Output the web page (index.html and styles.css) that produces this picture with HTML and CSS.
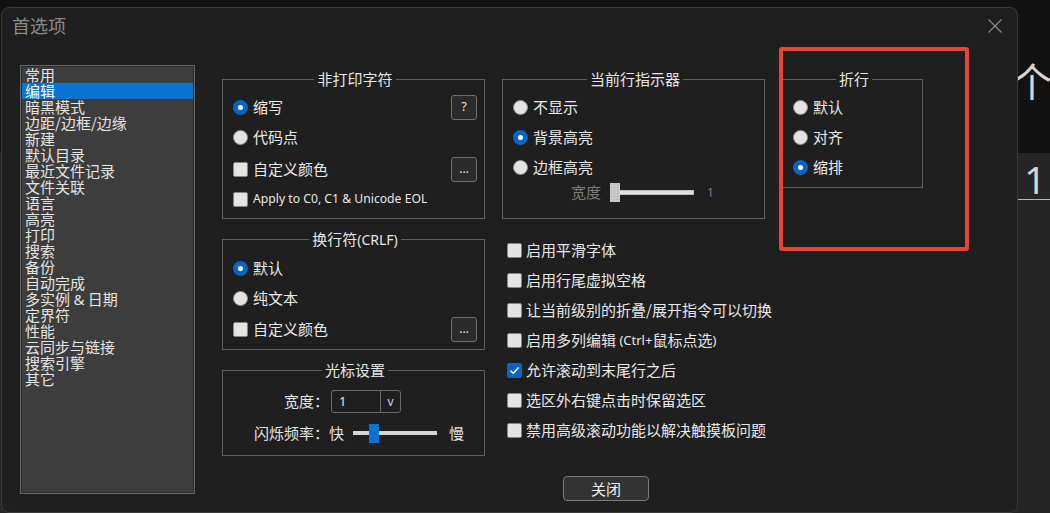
FILE: index.html
```html
<!DOCTYPE html>
<html lang="zh-CN">
<head>
<meta charset="utf-8">
<title>首选项</title>
<link rel="stylesheet" href="styles.css">
</head>
<body>
<div class="app">
  <div class="app-top"><span class="glyph-ge">个</span></div>
  <div class="app-bottom"><span class="glyph-one">1</span></div>
</div>

<div class="dialog">
  <header class="titlebar">
    <span class="title">首选项</span>
    <svg class="close-x" width="14" height="14" viewBox="0 0 14 14"><path d="M0.5 0.5 L13.5 13.5 M13.5 0.5 L0.5 13.5" stroke="#8c8c8c" stroke-width="1.1" fill="none"/></svg>
  </header>

  <div class="main">
    <ul class="nav">
      <li>常用</li>
      <li class="sel">编辑</li>
      <li>暗黑模式</li>
      <li>边距/边框/边缘</li>
      <li>新建</li>
      <li>默认目录</li>
      <li>最近文件记录</li>
      <li>文件关联</li>
      <li>语言</li>
      <li>高亮</li>
      <li>打印</li>
      <li>搜索</li>
      <li>备份</li>
      <li>自动完成</li>
      <li>多实例 <span class="lat">&amp;</span> 日期</li>
      <li>定界符</li>
      <li>性能</li>
      <li>云同步与链接</li>
      <li>搜索引擎</li>
      <li>其它</li>
    </ul>

    <div class="content">
      <div class="columns">
        <div class="col col-wide">
          <fieldset class="group g-np">
            <legend>非打印字符</legend>
            <div class="row split">
              <label class="opt"><span class="radio on"></span>缩写</label>
              <button class="mini">?</button>
            </div>
            <div class="row"><label class="opt"><span class="radio"></span>代码点</label></div>
            <div class="row split r-gap">
              <label class="opt"><span class="check"></span>自定义颜色</label>
              <button class="mini dots">...</button>
            </div>
            <div class="row"><label class="opt"><span class="check"></span><span class="lat small">Apply to C0, C1 &amp; Unicode EOL</span></label></div>
          </fieldset>

          <fieldset class="group g-eol">
            <legend>换行符<span class="lat">(CRLF)</span></legend>
            <div class="row"><label class="opt"><span class="radio on"></span>默认</label></div>
            <div class="row"><label class="opt"><span class="radio"></span>纯文本</label></div>
            <div class="row split r-gap1">
              <label class="opt"><span class="check"></span>自定义颜色</label>
              <button class="mini dots">...</button>
            </div>
          </fieldset>

          <fieldset class="group g-caret">
            <legend>光标设置</legend>
            <div class="caret-grid">
              <span class="clabel">宽度：</span>
              <div class="combo"><span class="combo-val lat">1</span><span class="combo-btn lat">v</span></div>
              <span class="clabel">闪烁频率：</span>
              <div class="blink">
                <span>快</span>
                <div class="slider"><span class="thumb"></span></div>
                <span class="slow">慢</span>
              </div>
            </div>
          </fieldset>
        </div>

        <div class="col col-wide">
          <fieldset class="group g-cli">
            <legend>当前行指示器</legend>
            <div class="row"><label class="opt"><span class="radio"></span>不显示</label></div>
            <div class="row"><label class="opt"><span class="radio on"></span>背景高亮</label></div>
            <div class="row"><label class="opt"><span class="radio"></span>边框高亮</label></div>
            <div class="row-sl">
              <span class="dim">宽度</span>
              <div class="dslider"><span class="dthumb"></span><span class="dtrack"></span></div>
              <span class="dim-num lat">1</span>
            </div>
          </fieldset>

          <div class="checklist">
            <div class="row"><label class="opt"><span class="check"></span>启用平滑字体</label></div>
            <div class="row"><label class="opt"><span class="check"></span>启用行尾虚拟空格</label></div>
            <div class="row"><label class="opt"><span class="check"></span>让当前级别的折叠/展开指令可以切换</label></div>
            <div class="row"><label class="opt"><span class="check"></span>启用多列编辑<span class="lat mid">&nbsp;(Ctrl+</span>鼠标点选<span class="lat mid">)</span></label></div>
            <div class="row"><label class="opt"><span class="check on"><svg width="13" height="13" viewBox="0 0 13 13"><path d="M2.5 6.8 L5.2 9.3 L10.6 3.6" stroke="#fff" stroke-width="1.5" fill="none"/></svg></span>允许滚动到末尾行之后</label></div>
            <div class="row"><label class="opt"><span class="check"></span>选区外右键点击时保留选区</label></div>
            <div class="row"><label class="opt"><span class="check"></span>禁用高级滚动功能以解决触摸板问题</label></div>
          </div>
        </div>

        <div class="col col-narrow">
          <fieldset class="group g-wrap">
            <legend>折行</legend>
            <div class="row"><label class="opt"><span class="radio"></span>默认</label></div>
            <div class="row"><label class="opt"><span class="radio"></span>对齐</label></div>
            <div class="row"><label class="opt"><span class="radio on"></span>缩排</label></div>
          </fieldset>
        </div>
      </div>

      <div class="footer"><button class="btn-close">关闭</button></div>
    </div>
  </div>

  <div class="highlight"></div>
</div>
</body>
</html>
```

FILE: styles.css
```css
* { box-sizing: border-box; }

html, body {
  margin: 0;
  padding: 0;
}

body {
  width: 1050px;
  height: 513px;
  overflow: hidden;
  position: relative;
  background: #121212;
  color: #e6e6e6;
  font-family: "Noto Sans CJK SC", "Noto Sans", sans-serif;
}

.lat { font-family: "Noto Sans", "Noto Sans CJK SC", sans-serif; }
.small { font-size: 12.2px; }
.mid { font-size: 13px; }

/* background application behind the dialog */
.app {
  display: grid;
  grid-template-rows: 153px 1fr;
  height: 513px;
}
.app-top {
  background: #121212;
  display: flex;
  justify-content: flex-end;
  padding-top: 58px;
}
.glyph-ge {
  font-size: 40px;
  line-height: 44px;
  height: 44px;
  color: #d6d6d6;
  margin-right: -2px;
}
.app-bottom {
  background: #262626;
  display: flex;
  justify-content: flex-end;
  align-items: flex-start;
  padding-top: 6px;
}
.glyph-one {
  width: 32px;
  height: 41px;
  font-family: "Noto Sans", sans-serif;
  font-size: 38px;
  line-height: 40px;
  color: #d6d6d6;
  text-align: center;
  border-bottom: 1px solid #b5b5b5;
  padding-left: 2px;
}

/* dialog window */
.dialog {
  position: absolute;
  left: 1px;
  top: 7px;
  width: 1017px;
  height: 506px;
  background: #1f1f1f;
  border: 1px solid #3a3a3a;
  border-radius: 8px;
  display: flex;
  flex-direction: column;
}

.titlebar {
  height: 34px;
  display: flex;
  align-items: center;
  justify-content: space-between;
  padding: 0 15px 0 10px;
}
.title {
  font-size: 18px;
  line-height: 20px;
  color: #8a8a8a;
}
.close-x { display: block; margin-top: 2px; }

.main {
  display: flex;
  align-items: flex-start;
  padding: 23px 0 0 18px;
}

.nav {
  list-style: none;
  margin: 0;
  padding: 1px;
  width: 175px;
  height: 429px;
  background: #3d3d3d;
  border: 1px solid #666;
  box-shadow: inset 0 0 0 1px #2c2c2c;
  flex: none;
}
.nav li {
  font-size: 15px;
  line-height: 16px;
  height: 16px;
  padding-left: 3px;
  color: #e4e4e4;
  white-space: nowrap;
}
.nav li.sel { background: #0a74d4; color: #fff; }

.content {
  margin: 6px 0 0 27px;
  width: 768px;
  display: flex;
  flex-direction: column;
}

.columns {
  display: flex;
  gap: 17px;
  align-items: flex-start;
  height: 384px;
}
.col { display: flex; flex-direction: column; gap: 12px; }
.col-wide { width: 263px; }
.col-narrow { width: 141px; }

.group {
  margin: 0;
  min-width: 0;
  border: 1px solid #5f5f5f;
  padding: 5px 7px 4px 10px;
}
.group legend {
  margin: 0 auto;
  padding: 0 3px;
  font-size: 15px;
  line-height: 16px;
  color: #e6e6e6;
}
.group legend .lat { font-size: 14px; }

.row {
  display: flex;
  align-items: center;
  height: 30px;
}
.row.split { justify-content: space-between; }
.r-gap { margin-top: 2px; }
.r-gap1 { margin-top: 1px; }

.g-eol { padding-bottom: 5px; }

.opt {
  display: flex;
  align-items: center;
  font-size: 15px;
  line-height: 18px;
  color: #e8e8e8;
  white-space: nowrap;
}

.radio {
  width: 15px;
  height: 15px;
  border-radius: 50%;
  background: #e4e4e4;
  border: 1px solid #8e8e8e;
  margin-right: 5px;
  flex: none;
}
.radio.on {
  background: #fff;
  border: 5px solid #0a66c2;
}

.check {
  width: 15px;
  height: 15px;
  border-radius: 2px;
  background: #e4e4e4;
  border: 1px solid #858585;
  margin-right: 5px;
  flex: none;
  display: flex;
  align-items: center;
  justify-content: center;
}
.check.on {
  background: #0a66c2;
  border-color: #0a66c2;
}
.check svg { display: block; }

.mini {
  width: 26px;
  height: 25px;
  padding: 0;
  background: #2b2b2b;
  border: 1px solid #707070;
  border-radius: 3px;
  color: #e6e6e6;
  font-family: "Noto Sans", sans-serif;
  font-size: 12px;
  line-height: 20px;
}
.mini.dots { line-height: 16px; letter-spacing: 0; }

/* caret settings */
.g-caret { padding-top: 8px; padding-bottom: 7px; }
.caret-grid {
  display: grid;
  grid-template-columns: 96px auto;
  grid-template-rows: 30px 30px;
  row-gap: 2px;
  align-items: center;
}
.clabel {
  text-align: right;
  font-size: 15px;
  line-height: 18px;
  color: #e6e6e6;
  white-space: nowrap;
}
.combo {
  margin-left: 2px;
  width: 70px;
  height: 23px;
  border: 1px solid #6a6a6a;
  border-radius: 3px;
  display: flex;
  font-size: 13px;
  line-height: 21px;
}
.combo-val { width: 49px; padding-left: 7px; border-right: 1px solid #6a6a6a; }
.combo-btn { flex: 1; text-align: center; color: #c9d2ee; font-size: 12px; }

.blink {
  display: flex;
  align-items: center;
  font-size: 15px;
  line-height: 18px;
  color: #e6e6e6;
}
.slider {
  margin-left: 9px;
  width: 84px;
  height: 4px;
  background: #d6d6d6;
  display: flex;
  align-items: center;
  padding-left: 16px;
}
.thumb {
  width: 10px;
  height: 19px;
  background: #0a74d4;
  flex: none;
}
.slow { margin-left: 12px; }

/* current line indicator */
.g-cli { padding-bottom: 16px; }
.row-sl {
  display: flex;
  align-items: center;
  height: 20px;
  padding-left: 58px;
}
.dim { font-size: 15px; line-height: 18px; color: #7c7c7c; }
.dslider {
  margin-left: 9px;
  display: flex;
  align-items: center;
}
.dthumb {
  width: 10px;
  height: 19px;
  background: #c9c9c9;
  background-image: radial-gradient(#a9a9a9 0.6px, transparent 0.7px);
  background-size: 3px 3px;
}
.dtrack {
  width: 74px;
  height: 5px;
  background: #e2e2e2;
  border: 1px solid #bdbdbd;
  border-left: 0;
}
.dim-num { margin-left: 13px; font-size: 12px; color: #7d7d9a; }

.checklist {
  margin-top: 4px;
  padding-left: 5px;
}
.checklist .check { margin-right: 4px; }

.g-wrap { padding-bottom: 5px; }

.footer {
  margin-top: 21px;
  display: flex;
  justify-content: center;
}
.btn-close {
  width: 86px;
  height: 25px;
  background: #333;
  border: 1px solid #7a7a7a;
  border-radius: 4px;
  color: #eee;
  font-family: "Noto Sans CJK SC", sans-serif;
  font-size: 15px;
  line-height: 20px;
  padding: 0;
}

/* annotation rectangle drawn over the dialog */
.highlight {
  position: absolute;
  left: 777px;
  top: 39px;
  width: 190px;
  height: 204px;
  border: 4px solid #ea4335;
  border-radius: 3px;
  pointer-events: none;
}
```
